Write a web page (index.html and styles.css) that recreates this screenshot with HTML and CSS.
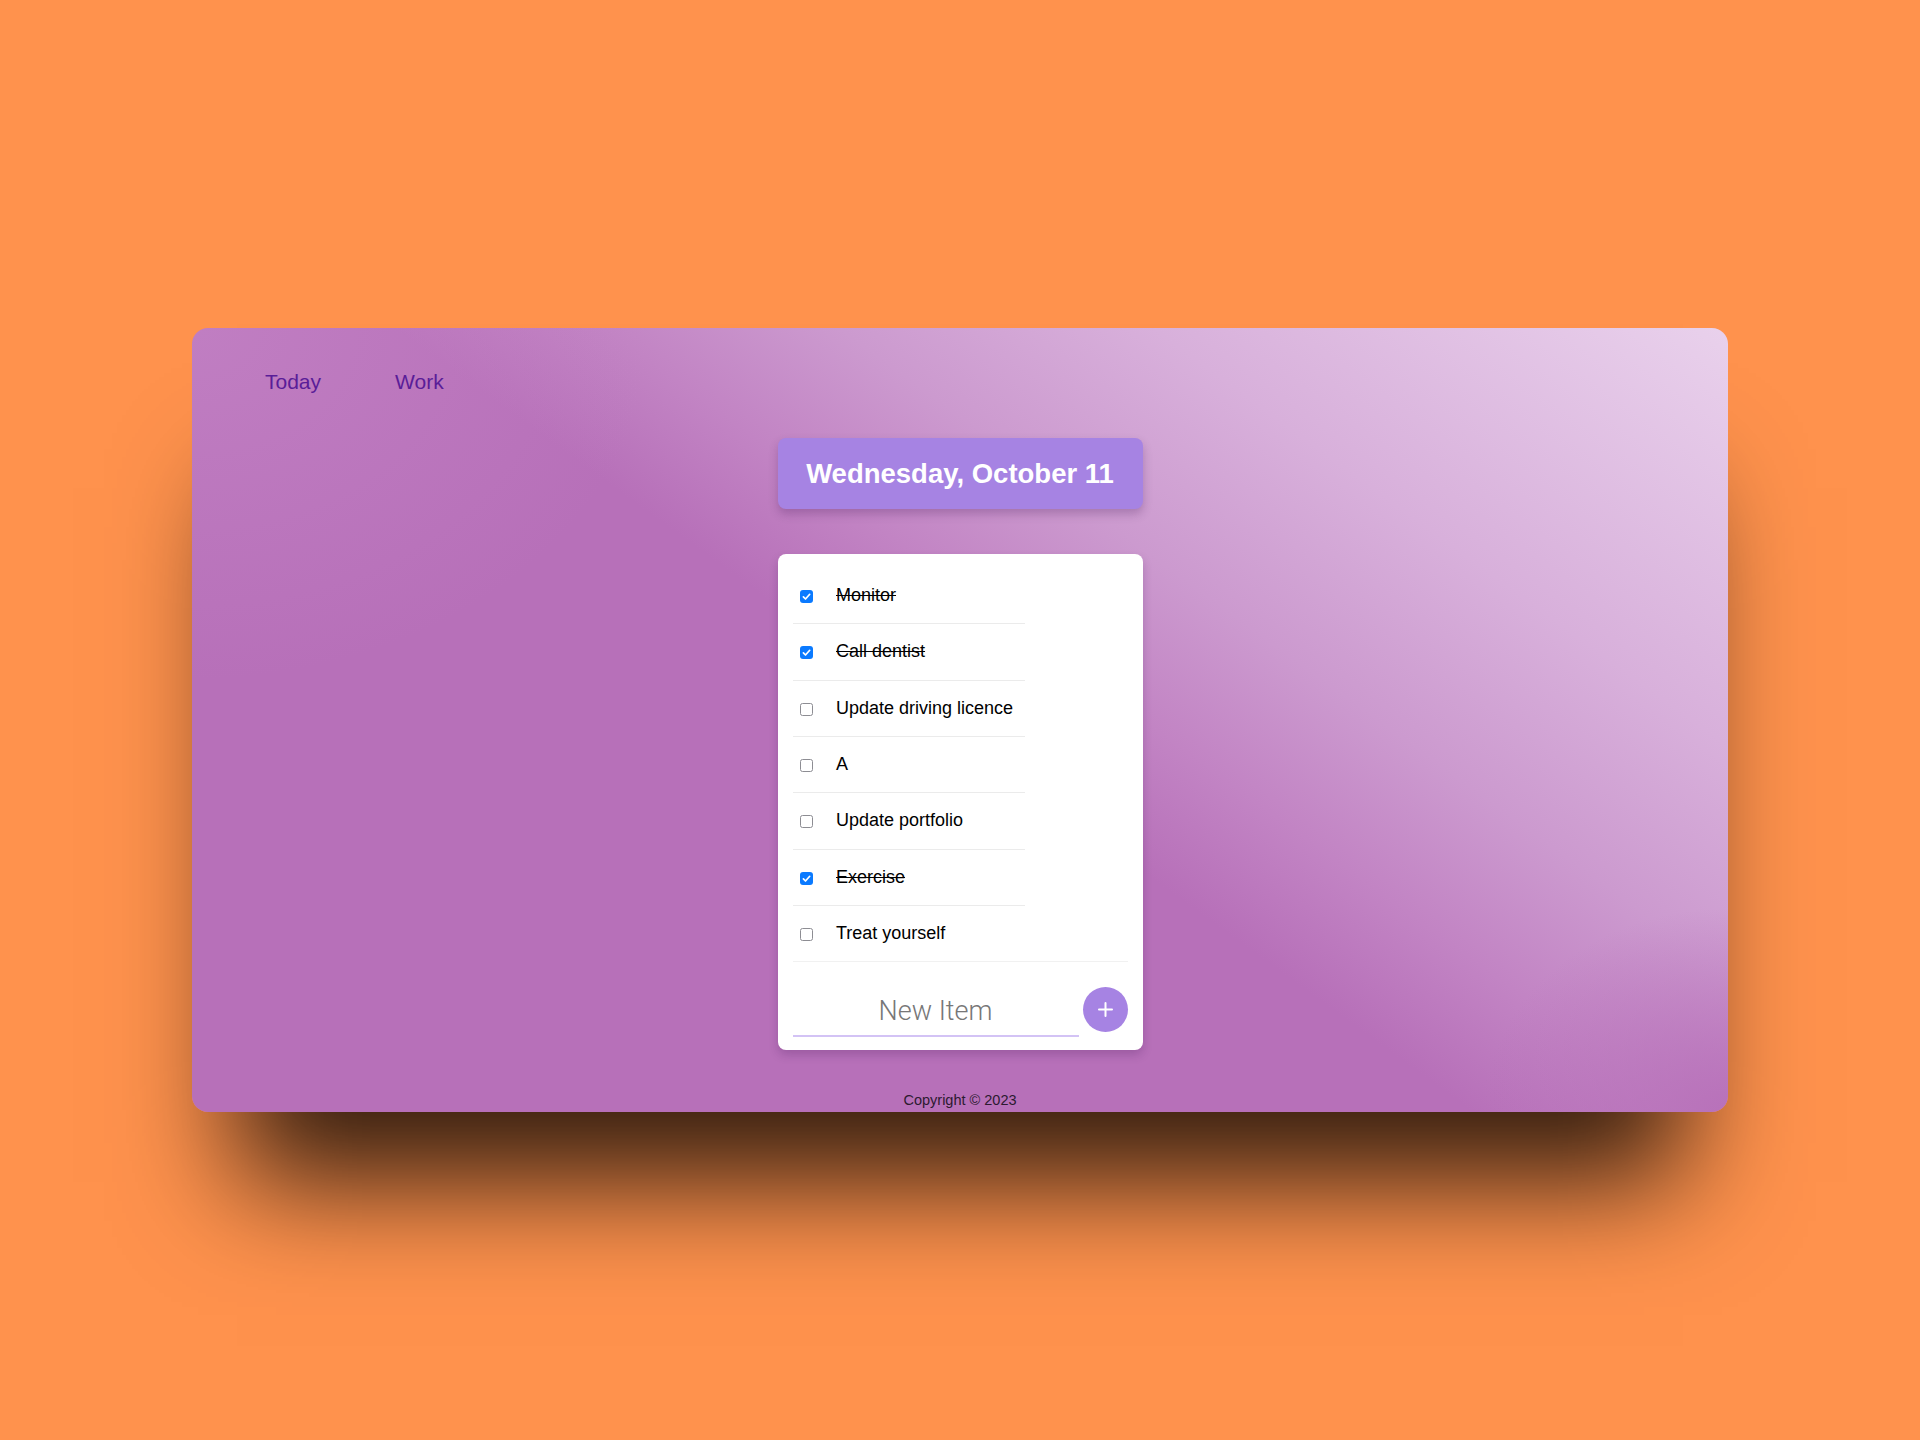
FILE: index.html
```html
<!DOCTYPE html>
<html lang="en">
<head>
<meta charset="utf-8">
<title>To Do List</title>
<link rel="stylesheet" href="styles.css">
</head>
<body>
<div class="window">
  <nav class="nav">
    <a class="nav-link" href="#">Today</a>
    <a class="nav-link" href="#">Work</a>
  </nav>

  <div class="box heading">
    <h1>Wednesday, October 11</h1>
  </div>

  <div class="box list">
    <div class="item">
      <span class="cb checked"><svg viewBox="0 0 13 13" width="13" height="13"><path d="M3.4 6.9 L5.5 9 L9.7 4.3" fill="none" stroke="#fff" stroke-width="1.7" stroke-linecap="round" stroke-linejoin="round"/></svg></span>
      <p class="label done">Monitor</p>
    </div>
    <div class="item">
      <span class="cb checked"><svg viewBox="0 0 13 13" width="13" height="13"><path d="M3.4 6.9 L5.5 9 L9.7 4.3" fill="none" stroke="#fff" stroke-width="1.7" stroke-linecap="round" stroke-linejoin="round"/></svg></span>
      <p class="label done">Call dentist</p>
    </div>
    <div class="item">
      <span class="cb"></span>
      <p class="label">Update driving licence</p>
    </div>
    <div class="item">
      <span class="cb"></span>
      <p class="label">A</p>
    </div>
    <div class="item">
      <span class="cb"></span>
      <p class="label">Update portfolio</p>
    </div>
    <div class="item">
      <span class="cb checked"><svg viewBox="0 0 13 13" width="13" height="13"><path d="M3.4 6.9 L5.5 9 L9.7 4.3" fill="none" stroke="#fff" stroke-width="1.7" stroke-linecap="round" stroke-linejoin="round"/></svg></span>
      <p class="label done">Exercise</p>
    </div>
    <div class="item">
      <span class="cb"></span>
      <p class="label">Treat yourself</p>
    </div>

    <form class="new-item">
      <input class="new-input" type="text" name="newItem" placeholder="New Item" autocomplete="off">
      <button class="add-btn" type="button"><svg viewBox="0 0 45 45" width="45" height="45"><path d="M22.5 16 V29 M16 22.5 H29" stroke="#fff" stroke-width="2" stroke-linecap="round"/></svg></button>
    </form>
  </div>

  <footer class="footer">Copyright © 2023</footer>
</div>
</body>
</html>
```

FILE: styles.css
```css
html, body {
  margin: 0;
  padding: 0;
}

body {
  width: 1920px;
  height: 1440px;
  background: #ff924d;
  display: flex;
  justify-content: center;
  align-items: flex-start;
  padding-top: 328px;
  box-sizing: border-box;
  overflow: hidden;
  font-family: "Liberation Sans", Arial, Helvetica, sans-serif;
}

.window {
  width: 1536px;
  height: 784px;
  border-radius: 16px;
  box-sizing: border-box;
  padding-top: 42px;
  display: flex;
  flex-direction: column;
  align-items: center;
  background:
    radial-gradient(ellipse 16% 26% at 100% 100%, rgba(183, 112, 185, 0.95) 0%, rgba(183, 112, 185, 0) 100%),
    radial-gradient(ellipse 30% 45% at 0% 0%, rgba(196, 132, 198, 0.7) 0%, rgba(196, 132, 198, 0) 100%),
    linear-gradient(36deg, #b770b9 0%, #b770b9 49%, #c284c4 57%, #cc9acf 66%, #d8b0db 78%, #e9d1ec 100%);
  box-shadow: 0 115px 110px -45px rgba(0, 0, 0, 0.8);
}

.nav {
  align-self: stretch;
  display: flex;
  padding-left: 73px;
  height: 23px;
}

.nav-link {
  font-size: 21px;
  line-height: 23px;
  color: #5a1d98;
  text-decoration: none;
  margin-right: 74px;
}

.box {
  width: 365px;
  box-sizing: border-box;
  border-radius: 8px;
}

.heading {
  margin-top: 45px;
  background: #a683e3;
  padding: 19px 0 19px;
  text-align: center;
  box-shadow: 0 5px 10px rgba(60, 20, 80, 0.25);
}

.heading h1 {
  margin: 0;
  font-size: 27.5px;
  line-height: 33px;
  font-weight: 700;
  color: #ffffff;
}

.list {
  margin-top: 45px;
  background: #ffffff;
  padding: 14px 15px 13px 15px;
  box-shadow: 0 5px 10px rgba(60, 20, 80, 0.22);
}

.item {
  width: 232px;
  height: 56.33px;
  box-sizing: border-box;
  border-bottom: 1px solid #ebebeb;
  display: flex;
  align-items: center;
  padding-left: 7.5px;
}

.cb {
  width: 13px;
  height: 13px;
  box-sizing: border-box;
  border: 1.3px solid #8d8d93;
  border-radius: 2.5px;
  background: #fff;
  flex: none;
  display: block;
  position: relative;
  top: 1px;
}

.cb.checked {
  border: none;
  background: #0a7aff;
  border-radius: 3px;
}

.cb svg {
  display: block;
}

.label {
  margin: 0 0 0 23px;
  font-size: 18px;
  line-height: 21px;
  color: #000;
}

.label.done {
  text-decoration: line-through;
}

.new-item {
  margin: -1px 0 0;
  border-top: 1px solid #f1f1f1;
  padding-top: 24.7px;
  display: flex;
  justify-content: space-between;
  align-items: flex-start;
}

.new-input {
  width: 286px;
  height: 50px;
  box-sizing: border-box;
  border: none;
  border-bottom: 2px solid #d3c3f5;
  outline: none;
  background: transparent;
  padding: 0;
  text-align: center;
  font-family: Roboto, "Liberation Sans", sans-serif;
  font-weight: 300;
  font-size: 27px;
  color: #333;
}

.new-input::placeholder {
  color: #777777;
}

.add-btn {
  width: 45px;
  height: 45px;
  border-radius: 50%;
  border: none;
  padding: 0;
  background: #a683e3;
  display: block;
  cursor: pointer;
}

.add-btn svg {
  display: block;
}

.footer {
  margin-top: 42px;
  font-size: 14.5px;
  line-height: 17px;
  color: #2c1a30;
}
```
